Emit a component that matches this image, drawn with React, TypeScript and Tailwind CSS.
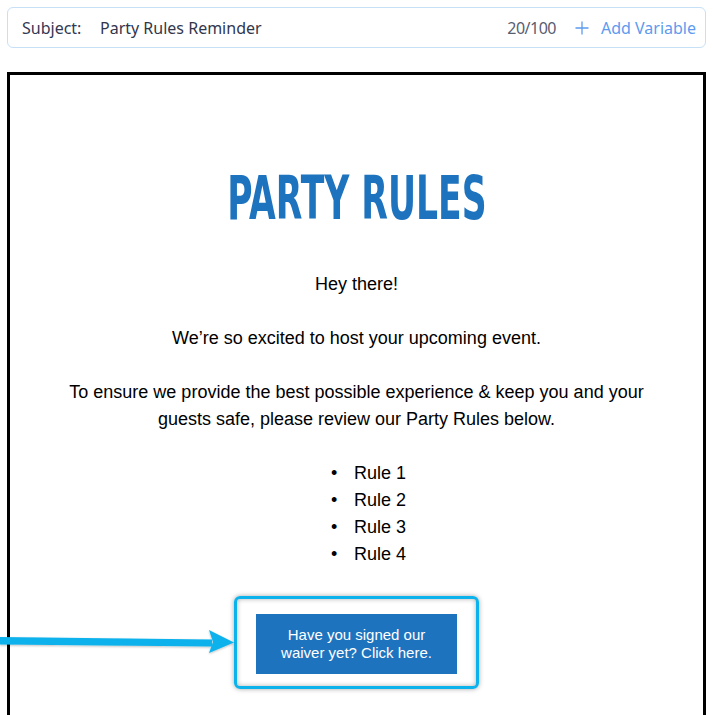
import React from 'react';

const App: React.FC = () => {
  const rules = ['Rule 1', 'Rule 2', 'Rule 3', 'Rule 4'];

  return (
    <div className="relative w-[713px] h-[715px] overflow-hidden bg-white">
      {/* Subject bar */}
      <div
        className="mx-[7px] mt-[7px] h-[41px] border border-[#c6e0f8] rounded-md flex items-center pl-[14px] pr-[9px] text-[16px]"
        style={{ fontFamily: '"Noto Sans", "Open Sans", sans-serif' }}
      >
        <span className="text-[#333853] w-[78px]">Subject:</span>
        <span className="text-[#32364b]">Party Rules Reminder</span>
        <span className="ml-auto text-[#595d70] tracking-[-0.5px]">20/100</span>
        <span className="ml-[19px] flex items-center gap-[12px] text-[#5c9bef]">
          <svg width="14" height="14" viewBox="0 0 14 14" fill="none" stroke="currentColor" strokeWidth="1.3">
            <path d="M7 0.5v13M0.5 7h13" />
          </svg>
          Add Variable
        </span>
      </div>

      {/* Email frame */}
      <div
        className="mx-[7px] mt-[24px] h-[700px] border-[3px] border-black text-black"
        style={{ fontFamily: '"Liberation Sans", Arial, sans-serif' }}
      >
        <div className="pt-[92px] flex flex-col items-center px-[50px]">
          <h1
            className="text-[61px] leading-none font-bold text-[#1e73be] scale-x-[0.63] whitespace-nowrap"
            style={{ fontFamily: '"Liberation Sans Narrow", "DejaVu Sans Condensed", "Liberation Sans", sans-serif' }}
          >
            PARTY RULES
          </h1>

          <div className="mt-[43px] text-[18px] leading-[27px] text-center flex flex-col gap-[27px]">
            <p>Hey there!</p>
            <p>We’re so excited to host your upcoming event.</p>
            <p>
              To ensure we provide the best possible experience &amp; keep you and your guests safe, please review our
              Party Rules below.
            </p>
            <ul className="flex flex-col items-center pl-[24px]">
              {rules.map((rule) => (
                <li key={rule} className="flex items-center">
                  <span className="w-[23px] text-left">•</span>
                  {rule}
                </li>
              ))}
            </ul>
          </div>

          {/* Highlighted button */}
          <div className="mt-[28px] border-[3px] border-[#0bb2ec] rounded-md pt-[15px] pb-[12px] px-[19px] shadow-[0_0_5px_rgba(0,0,0,0.35),inset_0_0_5px_rgba(0,0,0,0.3)]">
            <div className="w-[201px] h-[60px] bg-[#1e73be] text-white text-[15px] leading-[18px] text-center flex items-center justify-center px-[20px]">
              Have you signed our waiver yet? Click here.
            </div>
          </div>
        </div>
      </div>

      {/* Arrow annotation */}
      <svg className="absolute left-0 top-[626px]" width="240" height="32" viewBox="0 626 240 32">
        <defs>
          <filter id="sh" x="-10%" y="-50%" width="120%" height="200%">
            <feDropShadow dx="0" dy="1" stdDeviation="1" floodColor="#000" floodOpacity="0.25" />
          </filter>
        </defs>
        <g fill="#0bb2ec" filter="url(#sh)">
          <polygon points="0,637 212,639.5 212,646.5 0,644.5" />
          <polygon points="209,630 234,642.5 209,653 213,642" />
        </g>
      </svg>
    </div>
  );
};

export default App;
